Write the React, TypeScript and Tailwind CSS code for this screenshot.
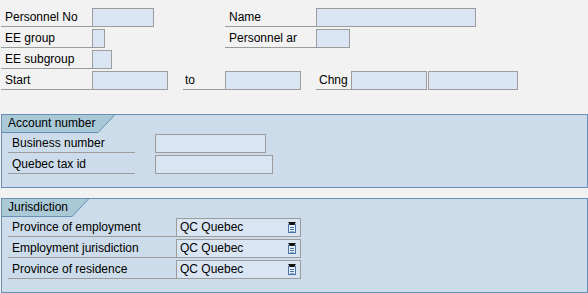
import React from "react";

const Label = ({ w, text, pl = "pl-1" }: { w: string; text: string; pl?: string }) => (
  <div className={`${w} ${pl} h-[19px] border-b border-[#9c9c9c] leading-[18px] whitespace-nowrap`}>{text}</div>
);

const Input = ({ w }: { w: string }) => (
  <div className={`${w} h-[19px] border border-[#9c9c9c] bg-[#d9e5f3]`} />
);

const Tab = ({ text, w }: { text: string; w: string }) => (
  <div className="flex h-[18px]">
    <div className={`${w} h-[18px] bg-[#a9c9d7] border-b border-[#6a8fb5] pl-[6px] leading-[16px] whitespace-nowrap`}>{text}</div>
    <svg width="17" height="18" viewBox="0 0 17 18" className="block">
      <polygon points="0,0 17,0 0,18" fill="#a9c9d7" />
      <line x1="16.5" y1="0" x2="0" y2="17.5" stroke="#6a8fb5" strokeWidth="1" />
    </svg>
  </div>
);

const ListIcon = () => (
  <svg width="10" height="11" viewBox="0 0 10 11" className="block">
    <rect x="1.5" y="2.5" width="7" height="8" fill="#e4ecf6" stroke="#4b74a3" />
    <polygon points="1,0 9,0 7,3 3,3" fill="#111" />
    <line x1="3" y1="5.5" x2="7" y2="5.5" stroke="#4b74a3" />
    <line x1="3" y1="7.5" x2="7" y2="7.5" stroke="#4b74a3" />
    <line x1="3" y1="9.5" x2="7" y2="9.5" stroke="#8aa3c2" />
  </svg>
);

const Combo = ({ value }: { value: string }) => (
  <div className="w-[125px] h-[19px] border border-[#9c9c9c] bg-[#d9e5f3] flex items-center justify-between pl-[3px] pr-[3px] leading-[16px]">
    <span className="-mt-[2px]">{value}</span>
    <ListIcon />
  </div>
);

export default function App() {
  return (
    <div className="w-[588px] h-[293px] bg-[#f2f2f2] text-black text-[12px] font-['Liberation_Sans',Arial,sans-serif] overflow-hidden">
      <div className="pt-2 pl-[1px] flex flex-col gap-[2px]">
        <div className="flex h-[19px]">
          <Label w="w-[91px]" text="Personnel No" />
          <Input w="w-[62px]" />
          <div className="ml-[71px]" />
          <Label w="w-[91px]" text="Name" />
          <Input w="w-[160px]" />
        </div>
        <div className="flex h-[19px]">
          <Label w="w-[91px]" text="EE group" />
          <Input w="w-[13px]" />
          <div className="ml-[120px]" />
          <Label w="w-[91px]" text="Personnel ar" />
          <Input w="w-[34px]" />
        </div>
        <div className="flex h-[19px]">
          <Label w="w-[91px]" text="EE subgroup" />
          <Input w="w-[20px]" />
        </div>
        <div className="flex h-[19px]">
          <Label w="w-[91px]" text="Start" />
          <Input w="w-[76px]" />
          <div className="ml-[15px]" />
          <Label w="w-[42px]" text="to" pl="pl-[2px]" />
          <Input w="w-[76px]" />
          <div className="ml-[15px]" />
          <Label w="w-[35px]" text="Chng" pl="pl-[3px]" />
          <Input w="w-[76px]" />
          <div className="ml-[1px]" />
          <Input w="w-[90px]" />
        </div>
      </div>

      <div className="mt-6 ml-[1px] w-[587px] h-[74px] border border-[#6a8fb5] bg-[#cddcea]">
        <Tab text="Account number" w="w-[96px]" />
        <div className="mt-[1px] pl-[6px] flex flex-col gap-[2px]">
          <div className="flex h-[19px]">
            <Label w="w-[127px]" text="Business number" />
            <div className="ml-[20px]" />
            <Input w="w-[111px]" />
          </div>
          <div className="flex h-[19px]">
            <Label w="w-[127px]" text="Quebec tax id" />
            <div className="ml-[20px]" />
            <Input w="w-[118px]" />
          </div>
        </div>
      </div>

      <div className="mt-[10px] ml-[1px] w-[587px] h-[95px] border border-[#6a8fb5] bg-[#cddcea]">
        <Tab text="Jurisdiction" w="w-[70px]" />
        <div className="mt-[1px] pl-[6px] flex flex-col gap-[2px]">
          <div className="flex h-[19px]">
            <Label w="w-[168px]" text="Province of employment" />
            <Combo value="QC Quebec" />
          </div>
          <div className="flex h-[19px]">
            <Label w="w-[168px]" text="Employment jurisdiction" />
            <Combo value="QC Quebec" />
          </div>
          <div className="flex h-[19px]">
            <Label w="w-[168px]" text="Province of residence" />
            <Combo value="QC Quebec" />
          </div>
        </div>
      </div>
    </div>
  );
}
